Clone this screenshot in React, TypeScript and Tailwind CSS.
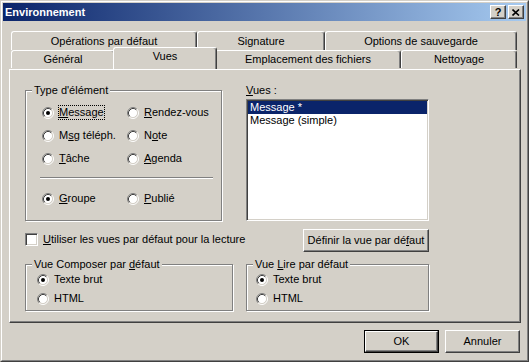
import type { ReactNode } from "react";

const raised =
  "border border-t-white border-l-white border-r-[#404040] border-b-[#404040] shadow-[inset_-1px_-1px_0_#808080]";
const sunken =
  "border border-t-[#808080] border-l-[#808080] border-r-white border-b-white shadow-[inset_1px_1px_0_#404040,inset_-1px_-1px_0_#d4d0c8]";
const etched = "border border-[#808080] shadow-[inset_1px_1px_0_white,1px_1px_0_white]";

function Radio({ checked }: { checked?: boolean }) {
  return (
    <svg width="12" height="12" viewBox="0 0 12 12" className="shrink-0">
      <circle cx="6" cy="6" r="4.5" fill="white" />
      <path d="M2.11 9.89A5.5 5.5 0 0 1 9.89 2.11" fill="none" stroke="#808080" />
      <path d="M9.89 2.11A5.5 5.5 0 0 1 2.11 9.89" fill="none" stroke="white" />
      <path d="M2.82 9.18A4.5 4.5 0 0 1 9.18 2.82" fill="none" stroke="#404040" />
      <path d="M9.18 2.82A4.5 4.5 0 0 1 2.82 9.18" fill="none" stroke="#d4d0c8" />
      {checked ? <circle cx="6" cy="6" r="2" fill="black" /> : null}
    </svg>
  );
}

function Option({ checked, focused, children }: { checked?: boolean; focused?: boolean; children: ReactNode }) {
  return (
    <div className="flex items-center gap-[4px]">
      <Radio checked={checked} />
      <span className={`border ${focused ? "border-dotted border-black" : "border-transparent"}`}>{children}</span>
    </div>
  );
}

function Group({ label, className, children }: { label: ReactNode; className: string; children: ReactNode }) {
  return (
    <fieldset className={`${etched} ${className}`}>
      <legend className="ml-[6px] bg-[#d4d0c8] px-[2px]">{label}</legend>
      {children}
    </fieldset>
  );
}

function Tab({ label, w, row }: { label: string; w: string; row: "back" | "front" }) {
  return (
    <div
      className={`${w} ${row === "back" ? "h-[19px]" : "h-[18px]"} flex items-center justify-center rounded-t-[3px] border-t border-l border-r border-t-white border-l-white border-r-[#404040] shadow-[inset_-1px_0_0_#808080]`}
    >
      {label}
    </div>
  );
}

function Button({ children, className }: { children: ReactNode; className: string }) {
  return <div className={`${raised} ${className} flex items-center justify-center`}>{children}</div>;
}

export default function App() {
  return (
    <div className="h-[362px] w-[529px] border border-t-[#d4d0c8] border-l-[#d4d0c8] border-r-[#404040] border-b-[#404040] bg-[#d4d0c8] font-['Liberation_Sans',Arial,sans-serif] text-[11px] leading-[13px] text-black">
      <div className="flex h-full flex-col border border-t-white border-l-white border-r-[#808080] border-b-[#808080] p-px">
        {/* title bar */}
        <div className="flex h-[18px] items-center bg-[linear-gradient(90deg,#0a246a,#a6caf0)] px-[2px]">
          <span className="font-bold text-white">Environnement</span>
          <div className="ml-auto flex gap-[2px]">
            <div className={`${raised} flex h-[14px] w-[16px] items-center justify-center bg-[#d4d0c8] text-[11px] font-bold leading-none`}>?</div>
            <div className={`${raised} flex h-[14px] w-[16px] items-center justify-center bg-[#d4d0c8]`}>
              <svg width="8" height="7" viewBox="0 0 8 7">
                <path d="M0.5 0.5L7 6.5M7 0.5L0.5 6.5" stroke="black" strokeWidth="1.6" />
              </svg>
            </div>
          </div>
        </div>

        <div className="flex flex-1 flex-col pl-[6px] pr-[5px] pt-[10px]">
          {/* tabs */}
          <div className="ml-[2px] w-[506px]">
            <div className="flex">
              <Tab row="back" w="w-[186px]" label="Opérations par défaut" />
              <Tab row="back" w="w-[128px]" label="Signature" />
              <Tab row="back" w="w-[192px]" label="Options de sauvegarde" />
            </div>
            <div className="flex items-start">
              <Tab row="front" w="w-[104px]" label="Général" />
              <div className="relative z-10 -mx-[2px] -mt-[3px] flex h-[22px] w-[104px] justify-center rounded-t-[3px] border-t border-l border-r border-t-white border-l-white border-r-[#404040] bg-[#d4d0c8] pt-[2px] shadow-[inset_-1px_0_0_#808080]">
                Vues
              </div>
              <Tab row="front" w="w-[186px]" label="Emplacement des fichiers" />
              <Tab row="front" w="w-[116px]" label="Nettoyage" />
            </div>
          </div>

          {/* panel */}
          <div className="h-[254px] border border-t-white border-l-white border-r-[#404040] border-b-[#404040] pl-[15px] pt-[14px] shadow-[inset_-1px_-1px_0_#808080]">
            <div className="flex">
              <Group label="Type d'élément" className="h-[137px] w-[197px]">
                <div className="ml-[16px] mt-[4px] grid auto-rows-[23px] grid-cols-[85px_1fr] items-center">
                  <Option checked focused>
                    <u>M</u>essage
                  </Option>
                  <Option>
                    <u>R</u>endez-vous
                  </Option>
                  <Option>
                    M<u>s</u>g téléph.
                  </Option>
                  <Option>
                    N<u>o</u>te
                  </Option>
                  <Option>
                    <u>T</u>âche
                  </Option>
                  <Option>
                    <u>A</u>genda
                  </Option>
                </div>
                <div className="ml-[14px] mt-[7px] h-[2px] w-[173px] border-t border-b border-t-[#808080] border-b-white" />
                <div className="ml-[16px] mt-[8px] grid h-[23px] grid-cols-[85px_1fr] items-center">
                  <Option checked>
                    <u>G</u>roupe
                  </Option>
                  <Option>
                    <u>P</u>ublié
                  </Option>
                </div>
              </Group>

              <div className="ml-[24px] w-[183px]">
                <div className="mb-[2px] h-[13px]">
                  <u>V</u>ues :
                </div>
                <div className={`${sunken} h-[122px] bg-white p-px`}>
                  <div className="h-[13px] bg-[#0a246a] pl-[2px] text-white">Message *</div>
                  <div className="h-[13px] pl-[2px]">Message (simple)</div>
                </div>
              </div>
            </div>

            <div className="mt-[8px] flex h-[23px] w-[404px] items-start">
              <div className="mt-[4px] flex items-center gap-[5px]">
                <div className={`${sunken} h-[13px] w-[13px] bg-white`} />
                <span>
                  <u>U</u>tiliser les vues par défaut pour la lecture
                </span>
              </div>
              <Button className="ml-auto h-[23px] w-[126px]">
                Définir la vue par dé<u>f</u>aut
              </Button>
            </div>

            <div className="mt-[6px] flex gap-[13px]">
              <Group
                label={
                  <>
                    Vue Composer par <u>d</u>éfaut
                  </>
                }
                className="h-[53px] w-[208px]"
              >
                <div className="ml-[11px] mt-px flex flex-col gap-[4px]">
                  <Option checked>Texte brut</Option>
                  <Option>HTML</Option>
                </div>
              </Group>
              <Group
                label={
                  <>
                    Vue <u>L</u>ire par défaut
                  </>
                }
                className="h-[53px] w-[183px]"
              >
                <div className="ml-[9px] mt-px flex flex-col gap-[4px]">
                  <Option checked>Texte brut</Option>
                  <Option>HTML</Option>
                </div>
              </Group>
            </div>
          </div>

          {/* dialog buttons */}
          <div className="mr-px mt-[7px] flex justify-end gap-[6px]">
            <div className="h-[23px] w-[75px] border border-black">
              <Button className="h-full w-full">OK</Button>
            </div>
            <Button className="h-[23px] w-[75px]">Annuler</Button>
          </div>
        </div>
      </div>
    </div>
  );
}
